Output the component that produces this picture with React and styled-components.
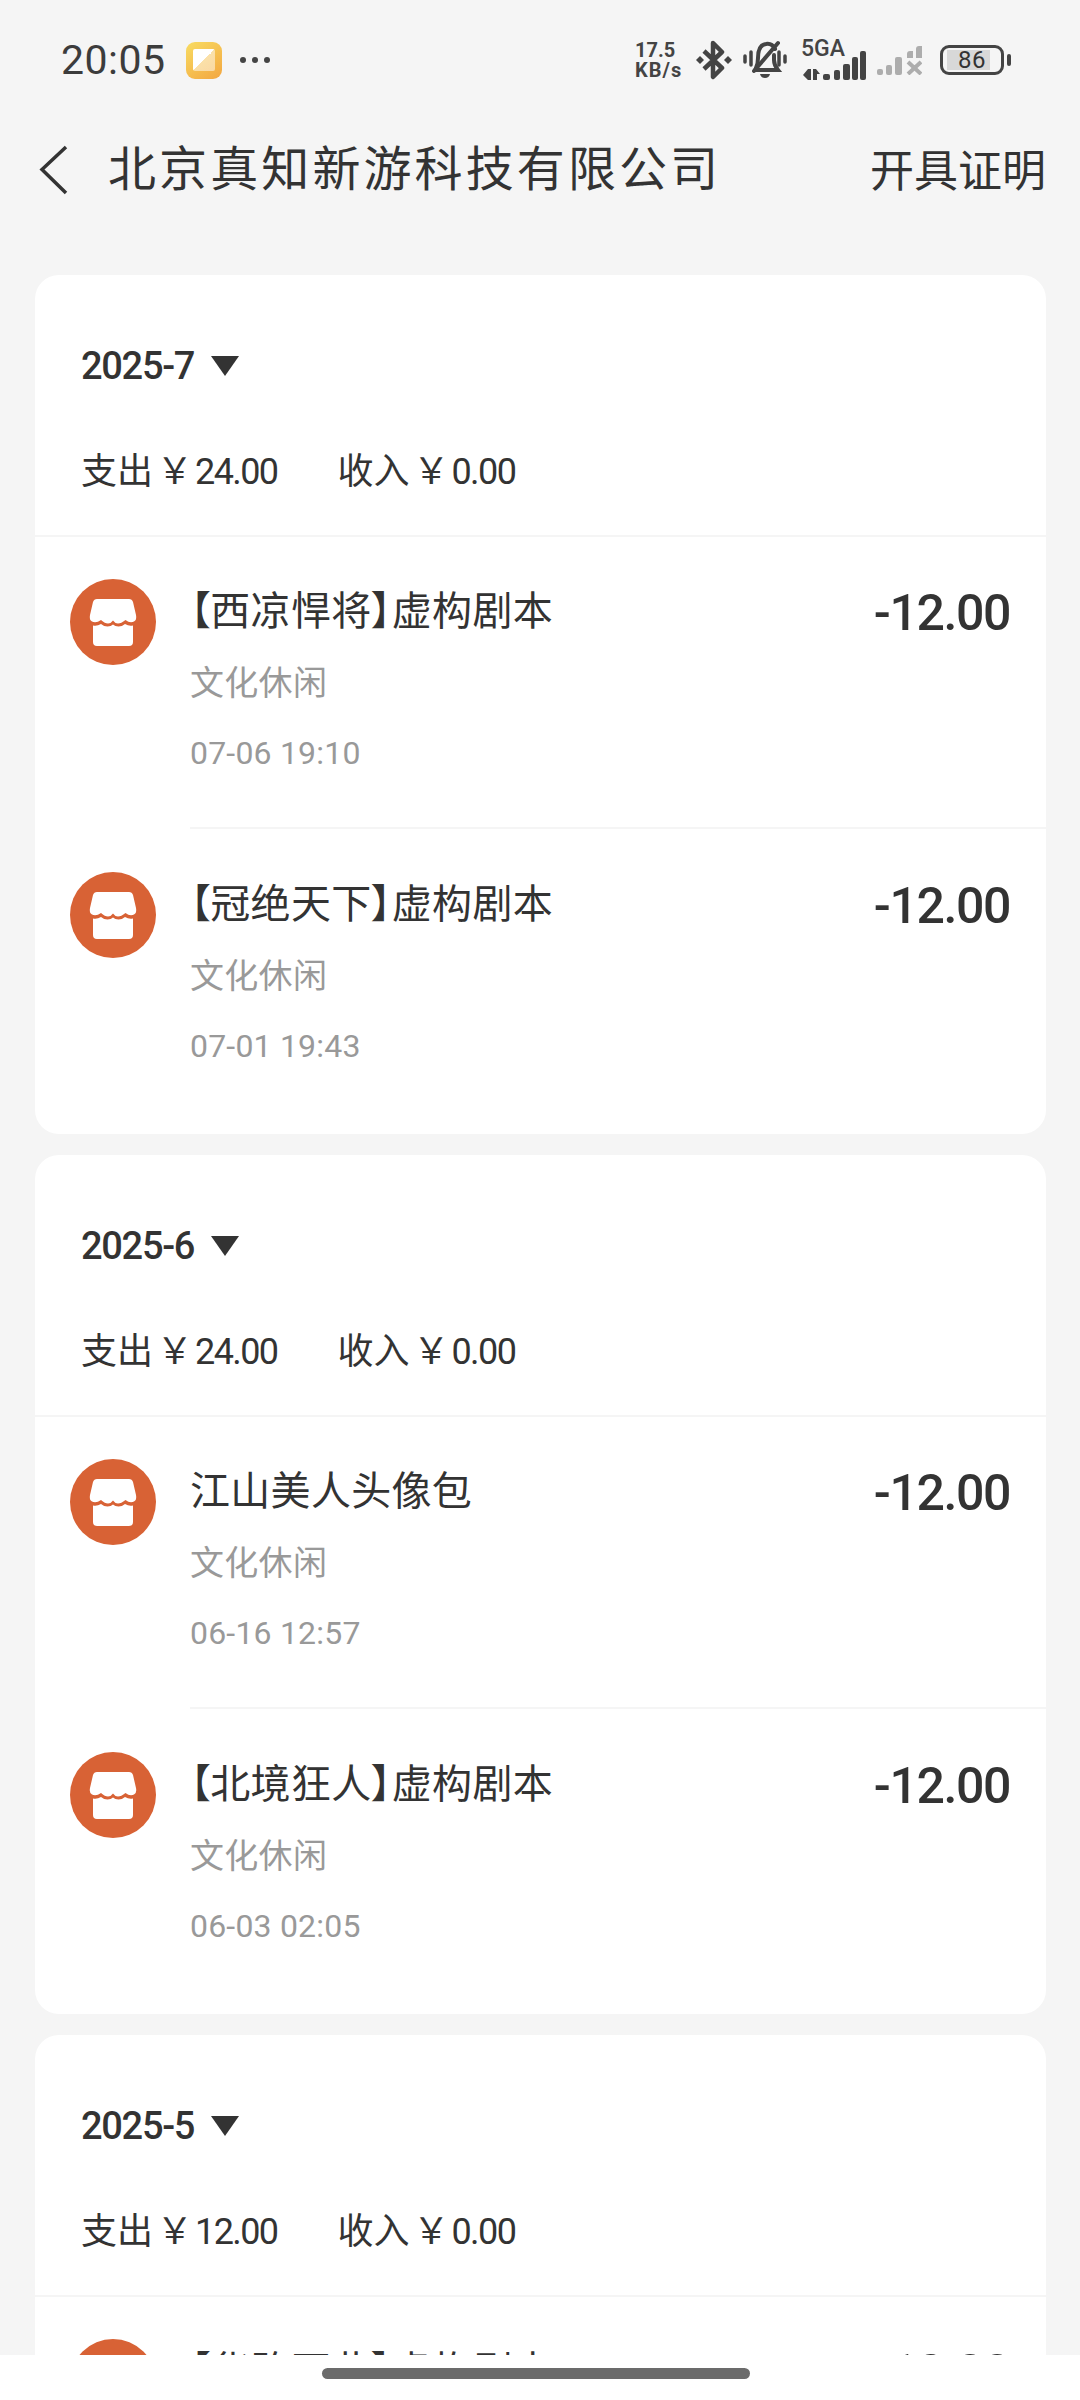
import styled, { createGlobalStyle } from "styled-components";

const GlobalStyle = createGlobalStyle`
	* {
		box-sizing: border-box;
	}
	html,
	body {
		margin: 0;
		padding: 0;
		background: #f5f5f5;
	}
	body {
		font-family: Roboto, "Noto Sans CJK SC", sans-serif;
		color: #333;
	}
`;

const months = [
	{
		period: "2025-7",
		out: "24.00",
		items: [
			{ title: "【西凉悍将】虚构剧本", time: "07-06 19:10" },
			{ title: "【冠绝天下】虚构剧本", time: "07-01 19:43" },
		],
	},
	{
		period: "2025-6",
		out: "24.00",
		items: [
			{ title: "江山美人头像包", time: "06-16 12:57" },
			{ title: "【北境狂人】虚构剧本", time: "06-03 02:05" },
		],
	},
	{
		period: "2025-5",
		out: "12.00",
		items: [{ title: "【华路再此】虚构剧本", time: "05-20 18:22" }],
	},
];

const StoreIcon = () => (
	<svg width="86" height="86" viewBox="0 0 86 86">
		<circle cx="43" cy="43" r="43" fill="#d86235" />
		<path
			fill="#fff"
			d="M27 20H59Q62 20 63 23L66 36Q67 41 64 42.500Q60 44.500 55.500 41Q51 44.500 48 44.500Q45 44.500 43 41.500Q41 44.500 38 44.500Q35 44.500 31 41Q26 44.500 22 42.500Q19 41 20 36L23 23Q24 20 27 20Z"
		/>
		<path
			fill="#fff"
			d="M23 46.500Q27 47.500 31 45Q34 47.500 37.500 47.500Q41 47.500 43 45.500Q45 47.500 48.500 47.500Q52 47.500 55 45Q59 47.500 63 46.500V63Q63 67 59 67H27Q23 67 23 63Z"
		/>
	</svg>
);

const BluetoothIcon = () => (
	<svg width="36" height="40" viewBox="0 0 36 40">
		<path
			d="M8 11L26 28L17 37V3L26 12L8 29"
			fill="none"
			stroke="#444"
			strokeWidth="4.500"
			strokeLinejoin="round"
		/>
		<path fill="#444" d="M0 20L4 16L8 20L4 24ZM28 20L32 16L36 20L32 24Z" />
	</svg>
);

const MutedBellIcon = () => (
	<svg width="44" height="40" viewBox="0 0 44 40">
		<g fill="none" stroke="#444" strokeLinecap="round">
			<path strokeWidth="3.500" d="M2 16V22M42 16V22" />
			<path strokeWidth="3.500" d="M8 12V25M36 12V25" />
			<path
				strokeWidth="4"
				d="M13 28Q15 24 15 18Q15 5 23 4Q29 3 32 9M31 15V20Q31 25 35 30H12"
			/>
			<path strokeWidth="4" d="M11 31L35 3" />
		</g>
		<path fill="#444" d="M17 34H27Q26 38 22 38Q18 38 17 34Z" />
	</svg>
);

const SignalIcon = () => (
	<svg width="63" height="29" viewBox="0 0 63 29">
		<g fill="#444">
			<path d="M5 18H8V29H5L0 24ZM10 18H13L17 23H14V29H10Z" />
			<rect x="20" y="23" width="7" height="6" rx="2" />
			<rect x="31" y="19" width="6" height="10" rx="2" />
			<rect x="40" y="13" width="7" height="16" rx="2" />
			<rect x="49" y="6" width="6" height="23" rx="2" />
			<rect x="57" y="0" width="6" height="29" rx="2" />
		</g>
	</svg>
);

const NoSignalIcon = () => (
	<svg width="45" height="29" viewBox="0 0 45 29">
		<g fill="#adadad">
			<rect x="0" y="23" width="6" height="6" rx="2" />
			<rect x="9" y="19" width="6" height="10" rx="2" />
			<rect x="18" y="11" width="7" height="18" rx="2" />
			<path d="M30 8Q30 5 33 5H36V12H30Z" />
			<path d="M39 3Q39 0 42 0H45V12H39Z" />
		</g>
		<path
			d="M31 16L44 28M44 16L31 28"
			stroke="#adadad"
			strokeWidth="4"
			fill="none"
		/>
	</svg>
);

const BackIcon = () => (
	<svg width="30" height="50" viewBox="0 0 30 50">
		<path d="M28 2L4 24.500L28 48" fill="none" stroke="#333" strokeWidth="3.500" />
	</svg>
);

const App = () => {
	return (
		<Page>
			<GlobalStyle />
			<StatusBar>
				<StatusLeft>
					<Clock>20:05</Clock>
					<NoteIcon>
						<NoteInner />
					</NoteIcon>
					<Dots>
						<i />
						<i />
						<i />
					</Dots>
				</StatusLeft>
				<StatusRight>
					<NetSpeed>
						<span>17.5</span>
						<small>KB/s</small>
					</NetSpeed>
					<BluetoothIcon />
					<MutedBellIcon />
					<SignalWrap>
						<NetLabel>5GA</NetLabel>
						<SignalIcon />
					</SignalWrap>
					<NoSignalIcon />
					<Battery>
						<BatteryBody>
							<BatteryFill />
							<BatteryText>86</BatteryText>
						</BatteryBody>
						<BatteryNub />
					</Battery>
				</StatusRight>
			</StatusBar>

			<Header>
				<HeaderLeft>
					<BackIcon />
					<Title>北京真知新游科技有限公司</Title>
				</HeaderLeft>
				<Action>开具证明</Action>
			</Header>

			<List>
				{months.map((month) => (
					<Card key={month.period}>
						<CardHead>
							<Period>
								<span>{month.period}</span>
								<Caret />
							</Period>
							<Summary>
								<SummaryItem>
									<b>支出</b>
									<em>￥</em>
									{month.out}
								</SummaryItem>
								<SummaryItem>
									<b>收入</b>
									<em>￥</em>
									0.00
								</SummaryItem>
							</Summary>
						</CardHead>
						{month.items.map((item, i) => (
							<div key={item.time}>
								{i > 0 && <RowDivider />}
								<Row>
									<StoreIcon />
									<RowText>
										<RowTitle>{item.title}</RowTitle>
										<RowCategory>文化休闲</RowCategory>
										<RowTime>{item.time}</RowTime>
									</RowText>
									<Amount>-12.00</Amount>
								</Row>
							</div>
						))}
					</Card>
				))}
			</List>

			<BottomBar>
				<Handle />
			</BottomBar>
		</Page>
	);
};

export default App;

const Page = styled.div`
	width: 1080px;
	height: 2400px;
	display: flex;
	flex-direction: column;
	overflow: hidden;
	background: #f5f5f5;
`;

const StatusBar = styled.div`
	height: 120px;
	flex: none;
	display: flex;
	align-items: flex-start;
	justify-content: space-between;
	padding: 40px 69px 0 61px;
`;

const StatusLeft = styled.div`
	display: flex;
	align-items: center;
	gap: 20px;
	height: 40px;
`;

const Clock = styled.span`
	font-size: 41px;
	line-height: 40px;
	letter-spacing: 0.500px;
	color: #3c3c3c;
`;

const NoteIcon = styled.div`
	width: 36px;
	height: 37px;
	border-radius: 9px;
	background: linear-gradient(145deg, #f8dc62, #f3a640);
	display: flex;
	align-items: center;
	justify-content: center;
`;

const NoteInner = styled.div`
	width: 22px;
	height: 22px;
	background: linear-gradient(135deg, #fff 50%, rgba(255, 255, 255, 0.5) 50%);
	border-radius: 2px;
`;

const Dots = styled.div`
	display: flex;
	gap: 6px;
	margin-left: -2px;

	i {
		width: 6px;
		height: 6px;
		border-radius: 50%;
		background: #444;
	}
`;

const StatusRight = styled.div`
	display: flex;
	align-items: center;
	height: 40px;
	gap: 11px;
`;

const NetSpeed = styled.div`
	display: flex;
	flex-direction: column;
	width: 50px;
	font-size: 20px;
	line-height: 20px;
	font-weight: 700;
	color: #444;

	small {
		font-size: 20px;
		letter-spacing: 1px;
		white-space: nowrap;
	}
`;

const SignalWrap = styled.div`
	position: relative;
	width: 63px;
	height: 40px;
	margin-left: 5px;
	display: flex;
	align-items: flex-end;
`;

const NetLabel = styled.span`
	position: absolute;
	left: -2px;
	top: -1px;
	font-size: 23px;
	line-height: 20px;
	font-weight: 500;
	color: #444;
`;

const Battery = styled.div`
	display: flex;
	align-items: center;
	gap: 3px;
	margin-left: 7px;
`;

const BatteryBody = styled.div`
	position: relative;
	width: 64px;
	height: 30px;
	border: 3px solid #444;
	border-radius: 9px;
`;

const BatteryFill = styled.div`
	position: absolute;
	left: 4px;
	top: 2px;
	bottom: 2px;
	width: 43px;
	background: #d8d8d8;
`;

const BatteryText = styled.span`
	position: absolute;
	left: 15px;
	top: 0;
	font-size: 24px;
	line-height: 24px;
	letter-spacing: 0.500px;
	color: #333;
`;

const BatteryNub = styled.div`
	width: 4px;
	height: 12px;
	border-radius: 2px;
	background: #444;
`;

const Header = styled.div`
	height: 155px;
	flex: none;
	display: flex;
	align-items: flex-start;
	justify-content: space-between;
	padding: 22px 34px 0 38px;
`;

const HeaderLeft = styled.div`
	display: flex;
	align-items: center;
	gap: 40px;
	height: 56px;
`;

const Title = styled.div`
	font-size: 48px;
	line-height: 56px;
	letter-spacing: 3.100px;
	color: #333;
`;

const Action = styled.div`
	font-size: 44px;
	line-height: 56px;
	margin-top: 2px;
	color: #333;
`;

const List = styled.div`
	flex: 1;
	min-height: 0;
	overflow: hidden;
	padding: 0 34px 0 35px;
	display: flex;
	flex-direction: column;
	gap: 21px;
`;

const Card = styled.section`
	flex: none;
	min-height: 859px;
	background: #fff;
	border-radius: 24px;
`;

const CardHead = styled.div`
	padding: 66px 46px 38px;
	border-bottom: 2px solid #f5f5f5;
`;

const Period = styled.div`
	display: flex;
	align-items: center;
	gap: 17px;
	font-size: 38px;
	line-height: 50px;
	font-weight: 500;
	letter-spacing: -1.300px;
	color: #333;
`;

const Caret = styled.span`
	width: 0;
	height: 0;
	border-left: 14px solid transparent;
	border-right: 14px solid transparent;
	border-top: 20px solid #333;
`;

const Summary = styled.div`
	display: flex;
	gap: 60px;
	margin-top: 56px;
`;

const SummaryItem = styled.div`
	font-size: 36px;
	line-height: 50px;
	letter-spacing: -1.600px;
	color: #333;

	b {
		font-weight: 400;
		letter-spacing: 0;
	}

	em {
		font-style: normal;
		display: inline-block;
		width: 42px;
		text-align: center;
	}
`;

const RowDivider = styled.div`
	height: 2px;
	margin: 0 0 1px 155px;
	background: #f5f5f5;
`;

const Row = styled.div`
	display: flex;
	align-items: flex-start;
	gap: 34px;
	padding: 42px 36px 49px 35px;
`;

const RowText = styled.div`
	flex: 1;
	display: flex;
	flex-direction: column;
	gap: 21px;
	padding-top: 8px;
`;

const RowTitle = styled.div`
	font-size: 40px;
	line-height: 50px;
	letter-spacing: 0.300px;
	font-feature-settings: "palt";
	color: #333;
`;

const RowCategory = styled.div`
	font-size: 34px;
	line-height: 50px;
	letter-spacing: 0.300px;
	color: #999;
`;

const RowTime = styled.div`
	font-size: 32px;
	line-height: 50px;
	margin-top: -1px;
	letter-spacing: 0.200px;
	color: #999;
`;

const Amount = styled.div`
	font-size: 50px;
	line-height: 50px;
	margin-top: 9px;
	font-weight: 500;
	letter-spacing: -1.400px;
	color: #333;
`;

const BottomBar = styled.div`
	height: 45px;
	flex: none;
	background: #fff;
	display: flex;
	justify-content: center;
	padding: 13px 8px 0 0;
`;

const Handle = styled.div`
	width: 428px;
	height: 11px;
	border-radius: 6px;
	background: #6b6b6b;
`;
